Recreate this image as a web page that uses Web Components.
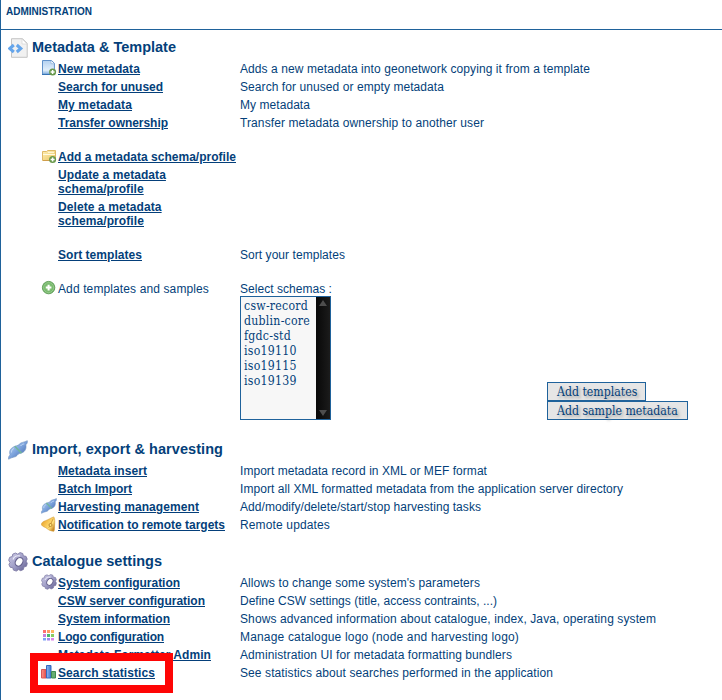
<!DOCTYPE html>
<html lang="en">
<head>
<meta charset="utf-8">
<title>Administration</title>
<style>
html,body{margin:0;height:700px;overflow:hidden;background:#fff}
</style>
</head>
<body>
<admin-page></admin-page>
<script>
const ICONS = {
  code: `<svg viewBox="0 0 20 20"><path d="M3.500.7h11l4.700 4.600v14H3.500z" fill="#f1f1f1" stroke="#c4c4c4"/><path d="M14 1v5h5z" fill="#fff" stroke="#d4d4d4" stroke-width=".7"/><path d="M5.800 7 1.800 10.500l4 3.500M8.800 7l4 3.500-4 3.500" fill="none" stroke="#64a5eb" stroke-width="3"/></svg>`,
  docadd: `<svg viewBox="0 0 16 16"><defs><linearGradient id="g" x2="0" y2="1"><stop stop-color="#b4d1f0"/><stop offset=".7" stop-color="#e2effb"/><stop offset="1" stop-color="#7dacdd"/></linearGradient></defs><path d="M1.500.5h9l2.900 2.800v11H1.500z" fill="url(#g)" stroke="#6292ca"/><path d="M1 14.500h10" stroke="#3774b5"/><path d="M10 .7v3h3.200" fill="#fff" stroke="#89afd8" stroke-width=".7"/><circle cx="11.600" cy="12" r="3.500" fill="#68984b"/><path d="M11.600 10v4M9.600 12h4" stroke="#fff" stroke-width="1.500"/></svg>`,
  folder: `<svg viewBox="0 0 16 16"><defs><linearGradient id="g" x2="1" y2="1"><stop stop-color="#fff0b5"/><stop offset="1" stop-color="#eac461"/></linearGradient></defs><path d="M1.500 12.500V3.500h4l1.200-1h7.800v10z" fill="url(#g)" stroke="#dfb967"/><path d="M2 6.500h12M7 4.300h6" stroke="#fffbe3"/><path d="M2 12.500h9" stroke="#cf9e4c"/><circle cx="11.600" cy="11.500" r="3.500" fill="#68984b"/><path d="M11.600 9.500v4M9.600 11.500h4" stroke="#fff" stroke-width="1.500"/></svg>`,
  add: `<svg viewBox="0 0 16 16"><defs><radialGradient id="g"><stop stop-color="#9bd08c"/><stop offset="1" stop-color="#63ad5a"/></radialGradient></defs><circle cx="7.600" cy="7.600" r="6.200" fill="url(#g)" stroke="#66a25e"/><circle cx="7.600" cy="7.600" r="5" fill="none" stroke="#b1d9a7" stroke-width=".6"/><path d="M7.600 4.800v5.600M4.800 7.600h5.600" stroke="#fff" stroke-width="2"/></svg>`,
  plug: `<svg viewBox="0 0 20 20"><defs><linearGradient id="g" x1=".2" y1=".2" x2=".8" y2=".8"><stop stop-color="#a9c8ef"/><stop offset=".5" stop-color="#7ba2dc"/><stop offset="1" stop-color="#5279b8"/></linearGradient></defs><path d="M.6 19.200c-.4-2 .4-3.500 1.500-4.300-1.300-3.400.3-6.500 3.400-8 2-1.300 4.500-.8 6-2.800C13.200 2 15.500 2.700 19.300.7c.3 2-.4 3.200-1.500 4.100.8 3.400-.5 6.600-3.800 8-1.500.7-3.500.5-4.800 2.500-1.500 2.300-4.500 1.300-8.600 3.900z" fill="url(#g)" stroke="#6c8fbd" stroke-width=".6"/><path d="m6.800 6.300 6.700 6.800" stroke="#72b69c" stroke-width="1.600"/><path d="M3.500 12.500c-.2-2 1-3.500 2.500-4M12.500 6c1.200-1.500 2.500-2 3.800-2" fill="none" stroke="#c2d9f5"/></svg>`,
  bell: `<svg viewBox="0 0 16 16"><defs><linearGradient id="g" x2="1" y2=".7"><stop stop-color="#d98f20"/><stop offset=".4" stop-color="#f5bd48"/><stop offset=".75" stop-color="#ffe07c"/><stop offset="1" stop-color="#c98a28"/></linearGradient></defs><path d="M12.800.9c-2.600.8-4.800 2.500-8.300 3.800C2 5.500-.1 7 .6 9c1 1.800 3.200 1.800 5.200 3.400 2 1.700 3.600 2.400 7 2.900 1.100-1.800.6-3.500.8-6.300.2-3 .5-6-.8-8.100z" fill="url(#g)" stroke="#d39b30" stroke-width=".6"/><path d="M12.300 2.500 7.800 11.800" stroke="#c88e2f" stroke-width=".8"/><circle cx="9.500" cy="9" r="1.500" fill="#ffe47e" stroke="#a66f18" stroke-width=".7"/></svg>`,
  gear: `<svg viewBox="0 0 20 20"><defs><linearGradient id="g" x2="1" y2="1"><stop stop-color="#cfcde6"/><stop offset=".55" stop-color="#9d9bc5"/><stop offset="1" stop-color="#5b5888"/></linearGradient></defs><path d="m7.500 1 2.300 1.200L12 .6l2.800.9.500 2.300 2.800.6 1.100 2.700-1.100 2 1.200 2.300-.9 2.900-2.500.7-.5 2.500-2.700 1.200-2.100-1.100-2.300 1.500-2.900-1-.5-2.300-2.800-.6-1.200-2.700 1.100-2-1.300-2.300 1-2.900 2.500-.7.600-2.500z" fill="url(#g)" stroke="#77749f" stroke-width=".8"/><ellipse cx="11" cy="9.800" rx="3.500" ry="4.600" transform="rotate(35 11 10)" fill="#fff" stroke="#66628d" stroke-width="1.200"/><path d="M5 7.500c1-3 4-4.300 7-3.500" fill="none" stroke="#eeeefa" stroke-width="1.200"/></svg>`,
  grid: `<svg viewBox="0 0 16 16"><path fill="#ff6f6f" d="M2 2h3v3H2z"/><path fill="#ff9a65" d="M6 2h3v3H6z"/><path fill="#ffb55f" d="M10 2h3v3h-3z"/><path fill="#c980dc" d="M2 6h3v3H2z"/><path fill="#4bb96d" d="M6 6h3v3H6z"/><path fill="#8acb63" d="M10 6h3v3h-3z"/><path fill="#7da2f5" d="M2 10h3v2.500H2z"/><path fill="#a587ec" d="M6 10h3v2.500H6z"/><path fill="#dd87e8" d="M10 10h3v2.500h-3z"/></svg>`,
  chart: `<svg viewBox="0 0 16 16"><defs><linearGradient id="r"><stop stop-color="#ff9188"/><stop offset="1" stop-color="#d94645"/></linearGradient><linearGradient id="b"><stop stop-color="#8bb8f2"/><stop offset="1" stop-color="#4177cc"/></linearGradient></defs><path d="M.5 5.500h5v8.500h-5z" fill="url(#r)" stroke="#d85757"/><path d="M5.500 1.500h4.500V14H5.500z" fill="url(#b)" stroke="#356ac1"/><path d="M10.500 7.500h4V14h-4z" fill="#66ad72" stroke="#3f8951"/></svg>`
};

/* Spreads letter-spacing on target so that the text inside source takes the given width. */
function fit(source, width, target = source) {
  if (!width) return;
  const range = document.createRange();
  range.selectNodeContents(source);
  const natural = range.getBoundingClientRect().width;
  target.style.letterSpacing = (width - natural) / source.textContent.length + 'px';
}

class AdminIcon extends HTMLElement {
  connectedCallback() {
    this.attachShadow({mode:'open'}).innerHTML =
      `<style>:host{display:block;width:var(--s,16px);height:var(--s,16px)}svg{display:block;width:100%;height:100%}</style>` + ICONS[this.getAttribute('name')];
  }
}
customElements.define('admin-icon', AdminIcon);

class AdminSection extends HTMLElement {
  connectedCallback() {
    this.attachShadow({mode:'open'}).innerHTML = `<style>
      :host{display:block;padding-top:6px}
      header{display:flex;align-items:flex-start;height:22px;padding-left:7px;gap:4px;box-sizing:border-box;font:bold 14.500px/18px "Liberation Sans",Arial,sans-serif}
      admin-icon{--s:20px}
    </style><header><admin-icon name="${this.getAttribute('icon')}"></admin-icon><span>${this.getAttribute('heading')}</span></header><slot></slot>`;
    fit(this.shadowRoot.querySelector('span'), +this.getAttribute('w'));
  }
}
customElements.define('admin-section', AdminSection);

class AdminRow extends HTMLElement {
  connectedCallback() {
    const icon = this.getAttribute('icon'), label = this.getAttribute('label');
    this.attachShadow({mode:'open'}).innerHTML = `<style>
      :host{display:grid;grid-template-columns:40px 17px 182px 1fr;padding:2px 0;font:12px/14px "Liberation Sans",Arial,sans-serif}
      :host([gap]){margin-top:16px}
      .i{grid-column:2;height:14px}
      admin-icon{margin-top:-2px}
      a{font-weight:bold;text-decoration:underline}
      .l{white-space:pre}
    </style><div class="i">${icon ? `<admin-icon name="${icon}"></admin-icon>` : ''}</div>
    <div class="l">${this.hasAttribute('plain') ? `<span>${label}</span>` : `<a>${label}</a>`}</div><div class="d"><slot></slot></div>`;
    fit(this.shadowRoot.querySelector('.l').firstChild, +this.getAttribute('lw'));
    fit(this, +this.getAttribute('w'), this.shadowRoot.querySelector('.d'));
  }
}
customElements.define('admin-row', AdminRow);

class SchemaList extends HTMLElement {
  connectedCallback() {
    this.attachShadow({mode:'open'}).innerHTML = `<style>
      :host{display:flex;box-sizing:border-box;width:91px;height:124px;border:1px solid #1f629b;background:#f7f7f7;font:12.200px/15px "DejaVu Serif Condensed","DejaVu Serif",serif;font-stretch:condensed}
      .o{flex:1;padding:2px 0 0 3px;white-space:nowrap}
      .o div{height:15px;letter-spacing:.25px}
      .b{width:14px;background:linear-gradient(90deg,#080808,#1b1b1b);display:flex;flex-direction:column;justify-content:space-between;align-items:center;padding:3px 0;box-sizing:border-box}
      svg{display:block;width:8px;height:6px}
    </style><div class="o">${this.getAttribute('options').split(' ').map(o=>`<div>${o}</div>`).join('')}</div>
    <div class="b"><svg viewBox="0 0 8 6"><path d="M4 0 8 6H0z" fill="#4d4d4d"/></svg><svg viewBox="0 0 8 6"><path d="M0 0h8L4 6z" fill="#4d4d4d"/></svg></div>`;
  }
}
customElements.define('schema-list', SchemaList);

class AdminButton extends HTMLElement {
  connectedCallback() {
    this.attachShadow({mode:'open'}).innerHTML = `<style>
      :host{display:block;box-sizing:border-box;height:19px;border:1px solid #1f629b;background:#e6e6e6;padding:1px 0 0 9px;font:12.200px/16px "DejaVu Serif Condensed","DejaVu Serif",serif;font-stretch:condensed;letter-spacing:0;text-shadow:2px 2px 3px #999;white-space:nowrap}
    </style><slot></slot>`;
  }
}
customElements.define('admin-button', AdminButton);

class AdminPage extends HTMLElement {
  connectedCallback() {
    this.attachShadow({mode:'open'}).innerHTML = `<style>
      :host{display:block;position:relative;box-sizing:border-box;height:700px;border-left:1px solid #1f629b;color:#043f7a}
      h1{margin:0;height:30px;box-sizing:border-box;border-bottom:1px solid #1f629b;padding:5px 0 0 5px;font:bold 10px/13px "Liberation Sans",Arial,sans-serif}
      main{padding-top:2px}
      .pick{display:flex;align-items:flex-end;justify-content:space-between;padding:0 34px 0 239px;margin-top:-2px}
      .btns{display:flex;flex-direction:column;align-items:flex-start;width:141px}
      .mark{position:absolute;left:29px;top:653px;width:143px;height:40px;box-sizing:border-box;border:8px solid #fe0505}
      .sp{margin-top:12px}
    </style>
    <h1>ADMINISTRATION</h1>
    <main>
      <admin-section icon="code" w="144" heading="Metadata &amp;amp; Template">
        <admin-row icon="docadd" lw="82" w="350" label="New metadata">Adds a new metadata into geonetwork copying it from a template</admin-row>
        <admin-row lw="105" w="204" label="Search for unused">Search for unused or empty metadata</admin-row>
        <admin-row lw="74" w="70" label="My metadata">My metadata</admin-row>
        <admin-row lw="110" w="244" label="Transfer ownership">Transfer metadata ownership to another user</admin-row>
        <admin-row gap icon="folder" lw="178" label="Add a metadata schema/profile"></admin-row>
        <admin-row lw="109" label="Update a metadata&#10;schema/profile"></admin-row>
        <admin-row lw="105" label="Delete a metadata&#10;schema/profile"></admin-row>
        <admin-row gap lw="84" w="105" label="Sort templates">Sort your templates</admin-row>
        <admin-row gap plain icon="add" lw="151" w="92" label="Add templates and samples">Select schemas :</admin-row>
        <div class="pick">
          <schema-list options="csw-record dublin-core fgdc-std iso19110 iso19115 iso19139"></schema-list>
          <div class="btns"><admin-button style="width:99px">Add templates</admin-button><admin-button style="width:141px">Add sample metadata</admin-button></div>
        </div>
      </admin-section>
      <admin-section style="margin-top:14px" icon="plug" w="191" heading="Import, export &amp;amp; harvesting">
        <admin-row lw="89" w="247" label="Metadata insert">Import metadata record in XML or MEF format</admin-row>
        <admin-row lw="74" w="383" label="Batch Import">Import all XML formatted metadata from the application server directory</admin-row>
        <admin-row icon="plug" lw="141" w="241" label="Harvesting management">Add/modify/delete/start/stop harvesting tasks</admin-row>
        <admin-row icon="bell" lw="167" w="90" label="Notification to remote targets">Remote updates</admin-row>
      </admin-section>
      <admin-section class="sp" icon="gear" w="130" heading="Catalogue settings">
        <admin-row icon="gear" lw="122" w="240" label="System configuration">Allows to change some system's parameters</admin-row>
        <admin-row lw="147" w="257" label="CSW server configuration">Define CSW settings (title, access contraints, ...)</admin-row>
        <admin-row lw="112" w="416" label="System information">Shows advanced information about catalogue, index, Java, operating system</admin-row>
        <admin-row icon="grid" lw="106" w="279" label="Logo configuration">Manage catalogue logo (node and harvesting logo)</admin-row>
        <admin-row lw="153" w="272" label="Metadata Formatter Admin">Administration UI for metadata formatting bundlers</admin-row>
        <admin-row icon="chart" lw="97" w="313" label="Search statistics">See statistics about searches performed in the application</admin-row>
      </admin-section>
    </main>
    <div class="mark"></div>`;
  }
}
customElements.define('admin-page', AdminPage);
</script>
</body>
</html>
